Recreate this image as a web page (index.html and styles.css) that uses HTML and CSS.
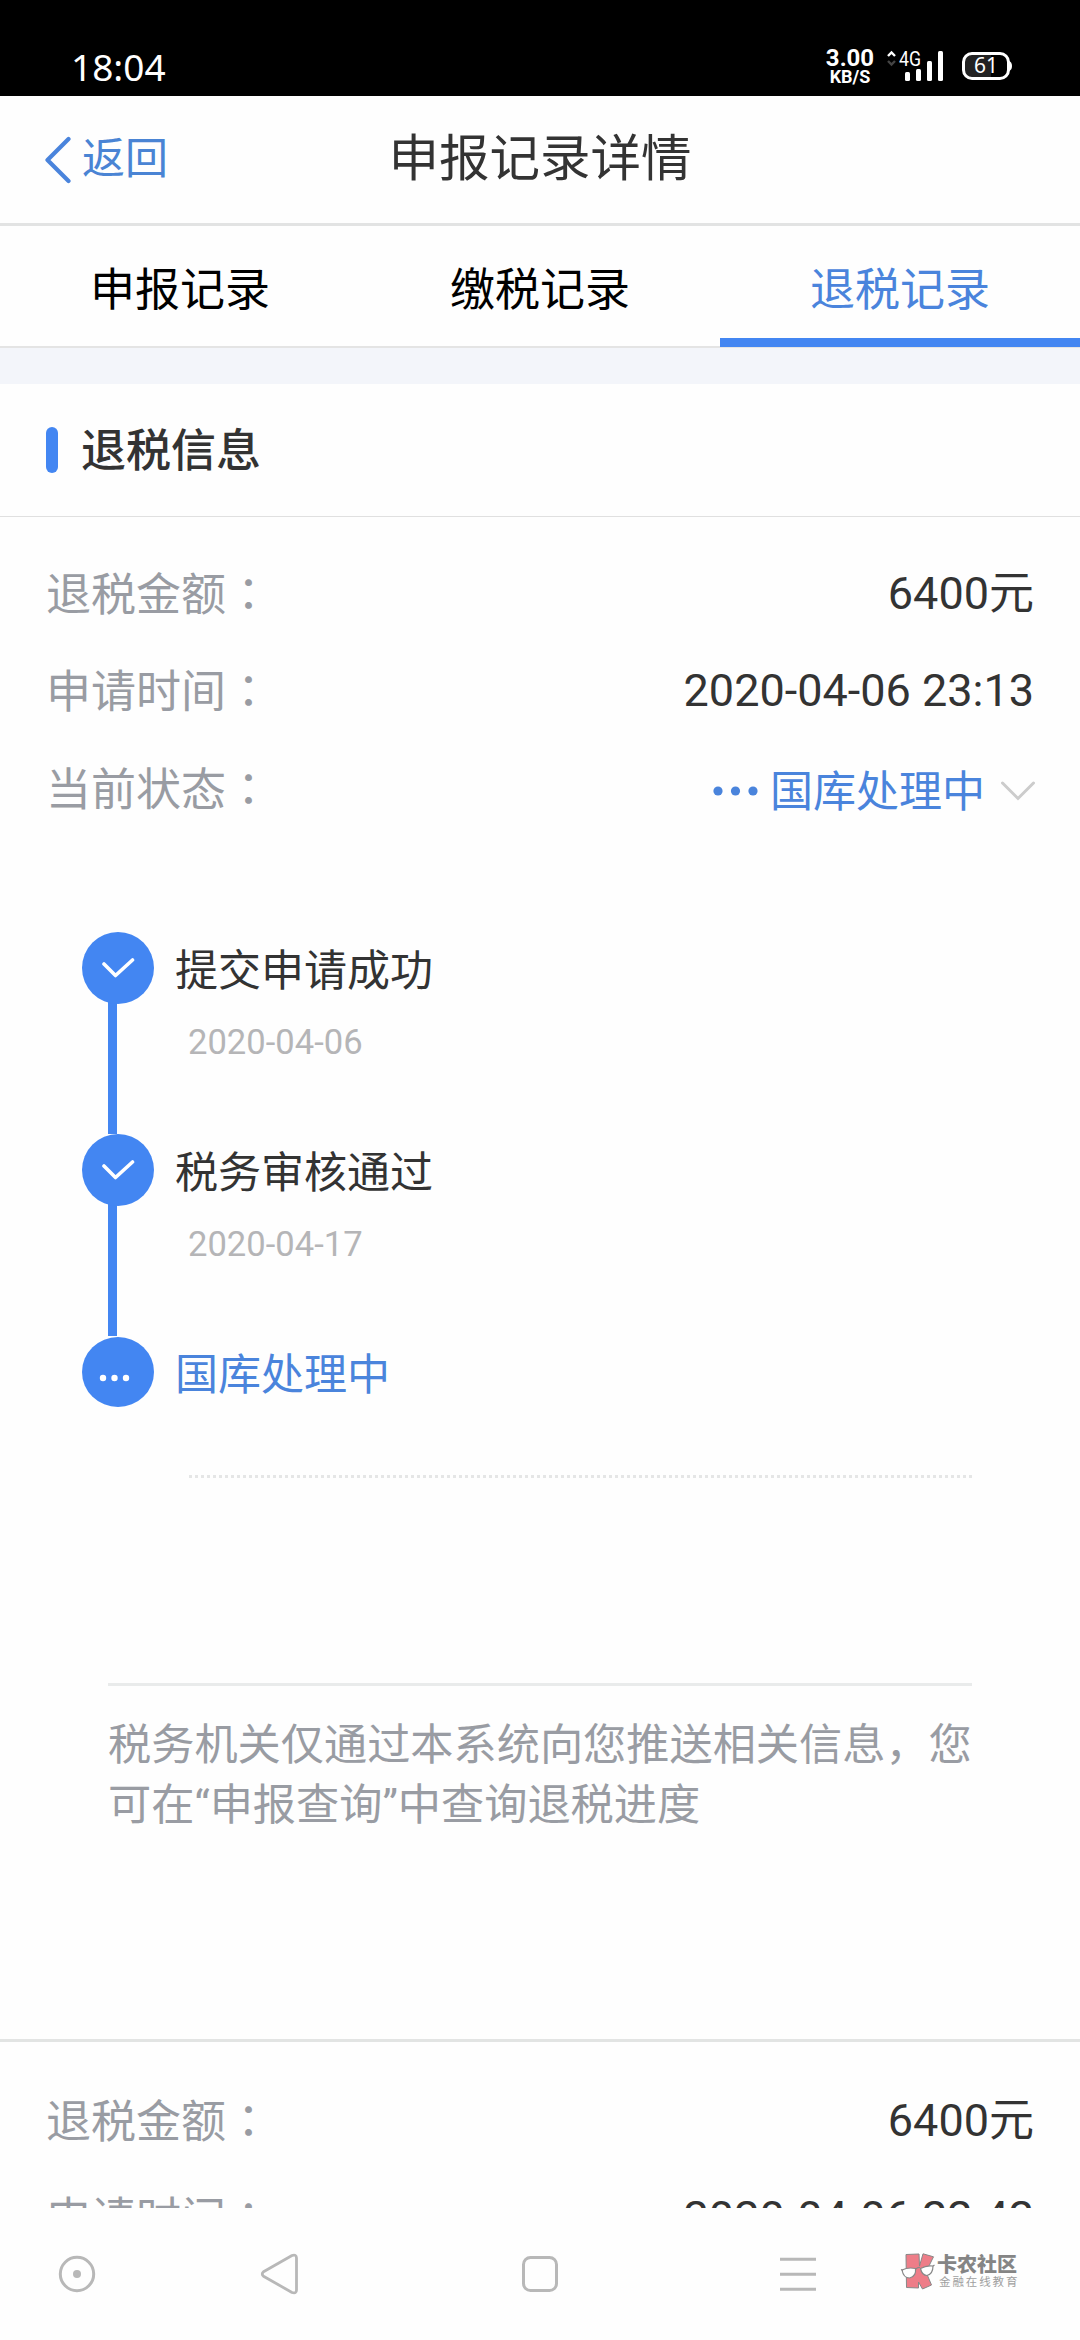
FILE: index.html
```html
<!DOCTYPE html>
<html lang="zh-CN">
<head>
    <meta charset="UTF-8">
    <meta name="viewport" content="width=device-width, initial-scale=1.0">
    <title>申报记录详情</title>
    <link rel="stylesheet" href="styles.css">
</head>
<body>
    <div class="status-bar">
        <span class="clock">18:04</span>
        <div class="speed">
            <span class="speed-num">3.00</span>
            <span class="speed-unit">KB/S</span>
        </div>
        <svg class="signal" width="60" height="36" viewBox="0 0 60 36">
            <path d="M2 10l3.500-3.500L9 10" fill="none" stroke="#fff" stroke-width="2.400"/>
            <path d="M2 15l3.500 3.500L9 15" fill="none" stroke="#444" stroke-width="2.400"/>
            <text x="13" y="20" class="net" textLength="22" lengthAdjust="spacingAndGlyphs">4G</text>
            <rect x="19" y="26" width="5" height="9" rx="1.500" fill="#fff"/>
            <rect x="30" y="23" width="5" height="12" rx="1.500" fill="#fff"/>
            <rect x="41" y="15" width="5" height="20" rx="1.500" fill="#fff"/>
            <rect x="52" y="5" width="5" height="30" rx="1.500" fill="#fff"/>
        </svg>
        <svg class="battery" width="52" height="30" viewBox="0 0 52 30">
            <path d="M10 2.500h20v25H10a7.500 7.500 0 0 1-7.500-7.500V10A7.500 7.500 0 0 1 10 2.500z" fill="#222"/>
            <rect x="2.500" y="2.500" width="45" height="25" rx="8.500" fill="none" stroke="#fff" stroke-width="3"/>
            <path d="M48 10q3 1 3 5t-3 5z" fill="#fff"/>
            <text x="13" y="22" class="level" textLength="24">61</text>
        </svg>
    </div>

    <header class="header">
        <a class="back">
            <svg width="27" height="48" viewBox="0 0 27 48"><path d="M24.500 3L3.500 24l21 21" fill="none" stroke="#4a84dc" stroke-width="4.200" stroke-linecap="round" stroke-linejoin="round"/></svg>
            <span>返回</span>
        </a>
        <h1>申报记录详情</h1>
    </header>

    <nav class="tabs">
        <a class="tab">申报记录</a>
        <a class="tab">缴税记录</a>
        <a class="tab active">退税记录</a>
    </nav>

    <main class="content">
        <h2 class="section-title"><span>退税信息</span></h2>

        <section class="record">
            <div class="row">
                <span class="label">退税金额<i class="colon" lang="zh-TW">：</i></span>
                <span class="value">6400元</span>
            </div>
            <div class="row">
                <span class="label">申请时间<i class="colon" lang="zh-TW">：</i></span>
                <span class="value">2020-04-06 23:13</span>
            </div>
            <div class="row">
                <span class="label">当前状态<i class="colon" lang="zh-TW">：</i></span>
                <span class="value state">
                    <svg width="46" height="12" viewBox="0 0 46 12" fill="#4a84dc"><circle cx="6" cy="6" r="4.600"/><circle cx="23.500" cy="6" r="4.600"/><circle cx="41" cy="6" r="4.600"/></svg>
                    <span class="state-text">国库处理中</span>
                    <svg width="36" height="22" viewBox="0 0 36 22"><path d="M2.500 3L18 18.500 33.500 3" fill="none" stroke="#ccc" stroke-width="3" stroke-linecap="round"/></svg>
                </span>
            </div>
        </section>

        <ul class="timeline">
            <li class="step">
                <span class="dot"><svg width="34" height="24" viewBox="0 0 34 24"><path d="M3 8L14.500 19.500 31.500 4" fill="none" stroke="#fff" stroke-width="3.600" stroke-linecap="round" stroke-linejoin="round"/></svg></span>
                <div class="step-body">
                    <p class="step-name">提交申请成功</p>
                    <p class="step-date">2020-04-06</p>
                </div>
            </li>
            <li class="step">
                <span class="dot"><svg width="34" height="24" viewBox="0 0 34 24"><path d="M3 8L14.500 19.500 31.500 4" fill="none" stroke="#fff" stroke-width="3.600" stroke-linecap="round" stroke-linejoin="round"/></svg></span>
                <div class="step-body">
                    <p class="step-name">税务审核通过</p>
                    <p class="step-date">2020-04-17</p>
                </div>
            </li>
            <li class="step current">
                <span class="dot"><svg width="34" height="10" viewBox="0 0 34 10" fill="#fff"><circle cx="5" cy="5" r="3.200"/><circle cx="16.500" cy="5" r="3.200"/><circle cx="28" cy="5" r="3.200"/></svg></span>
                <div class="step-body">
                    <p class="step-name">国库处理中</p>
                    <div class="dotted"></div>
                </div>
            </li>
        </ul>

        <p class="notice">税务机关仅通过本系统向您推送相关信息，您可在“申报查询”中查询退税进度</p>

        <section class="record next">
            <div class="row">
                <span class="label">退税金额<i class="colon" lang="zh-TW">：</i></span>
                <span class="value">6400元</span>
            </div>
            <div class="row">
                <span class="label">申请时间<i class="colon" lang="zh-TW">：</i></span>
                <span class="value">2020-04-06 22:42</span>
            </div>
        </section>
    </main>

    <footer class="nav-bar">
        <svg width="40" height="44" viewBox="0 0 40 44"><circle cx="20" cy="22" r="16.700" fill="none" stroke="#b8b8b8" stroke-width="3"/><circle cx="20" cy="22" r="4" fill="#b8b8b8"/></svg>
        <svg width="40" height="44" viewBox="0 0 40 44"><path d="M3.500 19.800L32 3.500q4.400-1.500 4.500 2.500v32q0 4-4.500 2.500L3.500 24.200q-2.500-2.200 0-4.400z" fill="none" stroke="#b8b8b8" stroke-width="2.800" stroke-linejoin="round"/></svg>
        <svg width="40" height="44" viewBox="0 0 40 44"><rect x="3.500" y="5.500" width="33" height="33" rx="7" fill="none" stroke="#b8b8b8" stroke-width="3"/></svg>
        <svg width="40" height="44" viewBox="0 0 40 44"><path d="M2 7.300h36M2 22.300h36M2 37.300h36" stroke="#b8b8b8" stroke-width="3"/></svg>
        <div class="brand">
            <svg width="36" height="38" viewBox="0 0 36 38">
                <path d="M6 2.500l13-.5.500 12L23 1.800l10.500 3L26 20l5.500 13-9 4-4-7v6L6.500 35.500z" fill="#ee7d88" stroke="#888" stroke-width="1"/>
                <path d="M2 18q6-3 13.500-1.500 1 8-6 9.500-6 0-7.500-8zM20.500 16.500q6-3.500 12.500-2.500 0 8-6 9.500-5 0-6.500-7z" fill="#fff" stroke="#888" stroke-width="1.200"/>
                <path d="M1 17.500l2 1M16 17q2-2 4-1.500M33 14l1.500-1" fill="none" stroke="#888" stroke-width="1.200"/>
            </svg>
            <div class="brand-text">
                <span class="brand-name">卡农社区</span>
                <span class="brand-sub">金融在线教育</span>
            </div>
        </div>
    </footer>
</body>
</html>
```
FILE: styles.css
```css
* {
    box-sizing: border-box;
    margin: 0;
    padding: 0;
}
body {
    width: 1080px;
    height: 2340px;
    display: flex;
    flex-direction: column;
    overflow: hidden;
    background-color: #fefefe;
    color: #333;
    font-family: Roboto, "Noto Sans CJK SC", sans-serif;
    font-size: 45px;
    line-height: 1.2;
}
svg {
    display: block;
    flex: none;
}

/* status bar */
.status-bar {
    flex: none;
    height: 96px;
    padding: 40px 67px 0 71px;
    display: flex;
    align-items: flex-start;
    background-color: #000;
    color: #fff;
}
.clock {
    margin-right: auto;
    font-family: "Noto Sans", sans-serif;
    font-size: 37px;
    line-height: 54px;
}
.speed {
    width: 50px;
    margin-right: 11px;
    padding-top: 7px;
    display: flex;
    flex-direction: column;
    align-items: center;
    font-weight: bold;
}
.speed-num {
    font-size: 24px;
    line-height: 22px;
}
.speed-unit {
    font-size: 18px;
    line-height: 16px;
}
.signal {
    margin: 6px 15px 0 0;
}
.battery {
    margin-top: 11px;
}
.net {
    fill: #fff;
    font-size: 20px;
}
.level {
    fill: #fff;
    font-family: "Noto Sans", sans-serif;
    font-size: 21px;
}

/* title */
.header {
    flex: none;
    height: 130px;
    padding: 0 44px;
    display: grid;
    grid-template-columns: 200px 1fr 200px;
    align-items: center;
    border-bottom: 3px solid #e2e3e3;
}
.back {
    display: flex;
    align-items: center;
    gap: 11px;
    color: #4a84d4;
    font-size: 43px;
}
.header h1 {
    font-size: 50.500px;
    font-weight: normal;
    text-align: center;
}

/* tabs */
.tabs {
    flex: none;
    height: 122px;
    display: flex;
    border-bottom: 2px solid #e4e4e4;
}
.tab {
    flex: 1;
    height: 121px;
    padding-top: 4px;
    line-height: 122px;
    text-align: center;
    color: #000;
}
.tab.active {
    color: #4a84dc;
    box-shadow: inset 0 -9px #4386f2;
}

.content {
    flex: none;
    height: 1860px;
    border-top: 36px solid #f3f5fa;
    overflow: hidden;
}
.section-title {
    height: 133px;
    padding-left: 46px;
    display: flex;
    align-items: center;
    gap: 23px;
    border-bottom: 1px solid #e0e0e0;
    font-size: 45px;
    font-weight: 500;
}
.section-title::before {
    content: "";
    width: 12px;
    height: 46px;
    border-radius: 6px;
    background-color: #4386f2;
}
.section-title span {
    padding-top: 4px;
}

.record {
    padding: 28px 46px 0;
}
.row {
    height: 97.500px;
    display: flex;
    justify-content: space-between;
    align-items: center;
}
.label {
    color: #999ca3;
}
.colon {
    font-family: "Noto Sans CJK TC", sans-serif;
    font-style: normal;
}
.state {
    display: flex;
    align-items: center;
    gap: 18px;
    margin-right: -2px;
    padding-top: 4px;
    color: #4a84dc;
    font-size: 43px;
}
.state-text {
    margin: 0 -3px 0 -6px;
    padding-top: 5px;
}

/* progress */
.timeline {
    margin-top: 94.500px;
    padding: 0 108px 0 82px;
    list-style: none;
}
.step {
    height: 202px;
    display: flex;
    gap: 21px;
    /* connector between the dots */
    background: linear-gradient(#4386f2, #4386f2) 26px 40px / 9px 100% no-repeat;
}
.step.current {
    background: none;
}
.dot {
    width: 72px;
    height: 72px;
    display: flex;
    align-items: center;
    justify-content: center;
    border-radius: 50%;
    background-color: #4386f2;
}
.current .dot {
    height: 70px;
    margin-top: 1px;
    padding: 11px 7px 0 0;
}
.step-body {
    flex: 1;
}
.step-name {
    font-size: 43px;
    line-height: 78px;
}
.step-date {
    padding-left: 13px;
    color: #b5b5b7;
    font-size: 34.600px;
    line-height: 65px;
}
.current .step-name {
    color: #4a84dc;
}
.dotted {
    height: 3px;
    margin: 61px 0 0 14px;
    background: repeating-linear-gradient(90deg, #e5e6e6 0 3px, transparent 3px 6px);
}

.notice {
    height: 356px;
    margin: 145px 108px 0;
    padding-top: 30px;
    border-top: 3px solid #e9ebeb;
    color: #999ca3;
    font-size: 43.200px;
    line-height: 60px;
}
.record.next {
    padding-top: 30px;
    border-top: 3px solid #e2e4e3;
}

/* system buttons */
.nav-bar {
    flex: none;
    height: 132px;
    padding: 0 57px;
    display: flex;
    align-items: center;
    background-color: #fefefe;
}
.nav-bar > svg:nth-child(2) {
    margin-left: 163px;
}
.nav-bar > svg:nth-child(3) {
    margin-left: 220px;
}
.nav-bar > svg:nth-child(4) {
    margin-left: 218px;
}
.brand {
    margin: -6px 0 0 82px;
    display: flex;
    align-items: center;
    gap: 1px;
}
.brand-text {
    padding-top: 2px;
    display: flex;
    flex-direction: column;
    white-space: nowrap;
}
.brand-name {
    color: #858585;
    font-size: 20px;
    font-weight: 900;
    line-height: 20px;
}
.brand-sub {
    padding-left: 2px;
    color: #a0a0a0;
    font-size: 11.500px;
    letter-spacing: 1.900px;
    line-height: 15px;
}
```
